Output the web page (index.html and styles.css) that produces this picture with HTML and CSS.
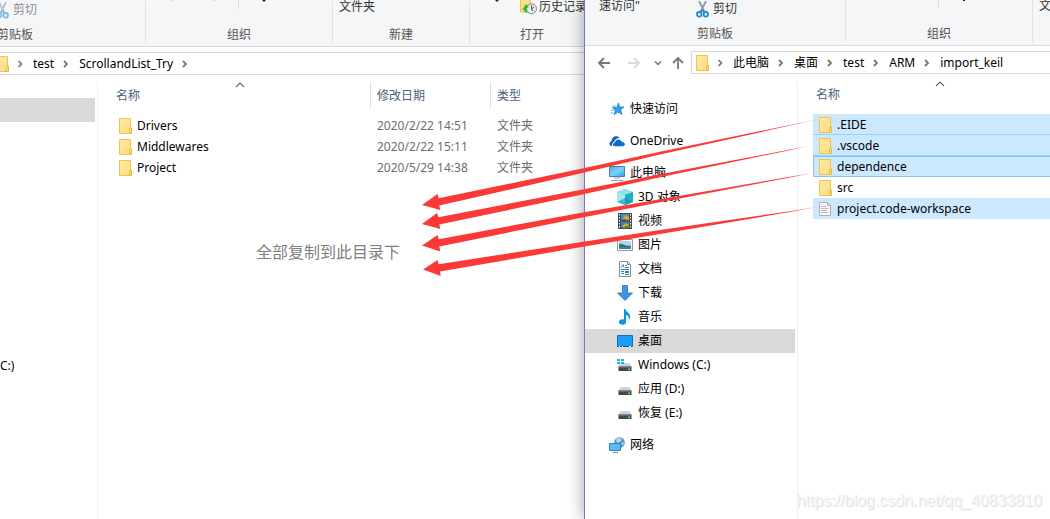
FILE: index.html
```html
<!DOCTYPE html>
<html lang="zh-CN">
<head>
<meta charset="utf-8">
<title>文件资源管理器</title>
<link rel="stylesheet" href="styles.css">
</head>
<body>
<svg class="defs" aria-hidden="true">
  <defs>
    <linearGradient id="fold" x1="0" y1="0" x2="1" y2="1"><stop offset="0" stop-color="#ffe9a6"/><stop offset="1" stop-color="#fddd7c"/></linearGradient>
    <linearGradient id="screen" x1="0" y1="0" x2="1" y2="1"><stop offset="0" stop-color="#3fb0f5"/><stop offset=".5" stop-color="#7fd0fb"/><stop offset="1" stop-color="#2f9ff0"/></linearGradient>
    <symbol id="folder" viewBox="0 0 13 16"><path d="M.5.5h11v10.500l1 .5v4h-12z" fill="url(#fold)" stroke="#efc54a"/><path d="M10.500 15.500v-4l.7-1.500h1.300v5.500z" fill="#fde08a" stroke="#e5b93c"/></symbol>
    <symbol id="chev" viewBox="0 0 25 10"><path d="M10 2l3 3-3 3" fill="none" stroke="#777" stroke-width="1.800"/></symbol>
    <symbol id="sort" viewBox="0 0 10 6"><path d="M1 5l4-4 4 4" fill="none" stroke="#666" stroke-width="1.200"/></symbol>
    <symbol id="drive" viewBox="0 0 16 16"><path d="M3.500 6h9l2 4H1.500z" fill="#cfd2d4"/><path d="M1.500 9.500h13V14h-13z" fill="#42484c"/><path d="M1.500 9.500h13v1h-13z" fill="#7c8286"/><path d="M11 11.500h2V13h-2z" fill="#3ff05a"/></symbol>
    <symbol id="cut" viewBox="0 0 13 17"><path d="M3 0l5.500 11M10 0L4.500 11" fill="none" stroke="#8e9aa8" stroke-width="1.800"/><ellipse cx="3.200" cy="13.200" rx="2.200" ry="2.400" fill="none" stroke="#2187c9" stroke-width="1.800"/><ellipse cx="9.800" cy="13.200" rx="2.200" ry="2.400" fill="none" stroke="#2187c9" stroke-width="1.800"/><path d="M4.500 11.500l2-2.500 2 2.500" fill="none" stroke="#2187c9" stroke-width="1.500"/></symbol>
  </defs>
</svg>

<main class="desktop">
  <section class="window window-back">
    <div class="ribbon">
      <div class="group group-clip">
        <div class="tools"><button class="tool tool-cut off" disabled><svg class="i-cut"><use href="#cut"/></svg>剪切</button></div>
        <div class="caption">剪贴板</div>
      </div>
      <div class="group group-org">
        <svg class="marks" viewBox="0 0 186 10"><path d="M26 0h1v1h-1zM68 0h1v1h-1z" fill="#b8bcc0"/><path d="M92 0h1v9h-1z" fill="#dcdddf"/><path d="M116 0h4l-1 1h-.5v1h-1V1H117z" fill="#222"/></svg>
        <div class="caption">组织</div>
      </div>
      <div class="group group-new">
        <div class="tools"><button class="tool tool-new">文件夹</button></div>
        <div class="caption">新建</div>
      </div>
      <div class="group group-open">
        <svg class="marks" viewBox="0 0 124 10"><path d="M25 0h4l-1 1h-.5v1h-1V1H26z" fill="#222"/></svg>
        <div class="tools"><button class="tool tool-hist">
          <svg class="i-hist" viewBox="0 0 17 16"><path d="M.5 0h10v13H.5z" fill="#fbdf86" stroke="#efc54a"/><circle cx="11.500" cy="9.800" r="5" fill="#e8e8e8" stroke="#8b8b8b"/><path d="M11.500 6.500v3.500l2.500-2M11.500 10l1.500 2" fill="none" stroke="#555"/><path d="M2 11l4-6 3 3-1.800.5C6 10 6.500 12.500 7.500 14 5 13.500 4 12 4 10.500z" fill="#2fb63a"/></svg>历史记录</button></div>
        <div class="caption">打开</div>
      </div>
    </div>
    <div class="bar">
      <nav class="address">
        <svg class="i-folder"><use href="#folder"/></svg>
        <svg class="i-chev"><use href="#chev"/></svg><a href="#">test</a>
        <svg class="i-chev"><use href="#chev"/></svg><a href="#">ScrollandList_Try</a>
        <svg class="i-chev"><use href="#chev"/></svg>
      </nav>
    </div>
    <div class="body">
      <nav class="tree">
        <a class="node selected" href="#" aria-label="快速访问"></a>
        <a class="node node-c" href="#">C:)</a>
      </nav>
      <div class="files">
        <table class="list">
          <colgroup><col class="c-name"><col class="c-date"><col class="c-type"></colgroup>
          <thead><tr><th><span class="head">名称<svg class="i-sort"><use href="#sort"/></svg></span></th><th><span class="head">修改日期</span></th><th><span class="head last">类型</span></th></tr></thead>
          <tbody>
            <tr><td><span class="file"><svg class="i-folder"><use href="#folder"/></svg>Drivers</span></td><td>2020/2/22 14:51</td><td>文件夹</td></tr>
            <tr><td><span class="file"><svg class="i-folder"><use href="#folder"/></svg>Middlewares</span></td><td>2020/2/22 15:11</td><td>文件夹</td></tr>
            <tr><td><span class="file"><svg class="i-folder"><use href="#folder"/></svg>Project</span></td><td>2020/5/29 14:38</td><td>文件夹</td></tr>
          </tbody>
        </table>
        <p class="note">全部复制到此目录下</p>
      </div>
    </div>
  </section>

  <section class="window window-front">
    <div class="ribbon">
      <div class="group group-clip">
        <div class="tools"><button class="tool tool-pin">速访问"</button><button class="tool tool-cut"><svg class="i-cut"><use href="#cut"/></svg>剪切</button></div>
        <div class="caption">剪贴板</div>
      </div>
      <div class="group group-org">
        <svg class="marks" viewBox="0 0 186 10"><path d="M92 0h1v8h-1z" fill="#dcdddf"/><path d="M117 0h2v1h-2z" fill="#222"/></svg>
        <div class="caption">组织</div>
      </div>
      <div class="group group-new">
        <div class="tools"><button class="tool tool-new">文</button></div>
      </div>
    </div>
    <div class="bar">
      <div class="history">
        <button class="go" aria-label="后退"><svg viewBox="0 0 14 14"><path d="M13 7H2M7 2L2 7l5 5" fill="none" stroke="#777" stroke-width="1.800"/></svg></button>
        <button class="go" aria-label="前进"><svg viewBox="0 0 14 14"><path d="M1 7h11M7 2l5 5-5 5" fill="none" stroke="#d9d9d9" stroke-width="1.800"/></svg></button>
        <button class="go go-small" aria-label="最近"><svg viewBox="0 0 8 14"><path d="M1 5.500l3 3 3-3" fill="none" stroke="#777" stroke-width="1.500"/></svg></button>
        <button class="go" aria-label="向上"><svg viewBox="0 0 14 14"><path d="M6 13V2M1 7l5-5 5 5" fill="none" stroke="#777" stroke-width="1.800"/></svg></button>
      </div>
      <nav class="address">
        <svg class="i-folder"><use href="#folder"/></svg>
        <svg class="i-chev"><use href="#chev"/></svg><a href="#">此电脑</a>
        <svg class="i-chev"><use href="#chev"/></svg><a href="#">桌面</a>
        <svg class="i-chev"><use href="#chev"/></svg><a href="#">test</a>
        <svg class="i-chev"><use href="#chev"/></svg><a href="#">ARM</a>
        <svg class="i-chev"><use href="#chev"/></svg><a href="#">import_keil</a>
      </nav>
    </div>
    <div class="body">
      <nav class="tree">
        <a class="node" href="#"><svg viewBox="0 0 16 16"><path d="M9.500 2l1.200 4h4.300l-3.300 2.800 1.300 4.700L9 11l-3.800 2.500L6.500 9.300 3.500 6.500H7.800z" fill="#2ea3ee" stroke="#1878bd" stroke-width=".7"/><path d="M3 5h4M2 9h4M1.500 12h3" stroke="#5db4ec"/></svg>快速访问</a>
        <a class="node top" href="#"><svg viewBox="0 0 16 16"><path d="M3 13C0 13-.5 9 2.500 8.300 2.500 4 8 1.500 10.500 5c-3 0-5 2-5.500 4-1.500.5-2.500 2-2 4z" fill="#0a5fb8"/><path d="M6 13.200c-3 0-2.500-3.600 0-3.700C6.500 5.500 12 5.500 12.800 9c3.700-.3 4.200 4.200.7 4.200z" fill="#0b6fd0"/></svg>OneDrive</a>
        <a class="node top" href="#"><svg viewBox="0 0 16 16"><path d="M.5 1.500h15v10H.5z" fill="url(#screen)" stroke="#4b7fa8"/><path d="M5 13h6M2 15.500h12" stroke="#8d9aa6"/></svg>此电脑</a>
        <a class="node sub" href="#"><svg viewBox="0 0 16 16"><path d="M0 3l8-3 8 3v10l-8 3-8-3z" fill="#3cc0d2"/><path d="M0 3l8-3 8 3-8 3z" fill="#8fe3ea"/><path d="M0 3l8 3v10l-8-3z" fill="#a4e9ef"/><path d="M8 6l8-3v10l-8 3z" fill="#1fb0c6"/><path d="M0 13l8-4 8 4-8 3z" fill="#1596b0" opacity=".6"/></svg>3D 对象</a>
        <a class="node sub" href="#"><svg viewBox="0 0 16 16"><path d="M1 0h14v16H1z" fill="#4b4b4b"/><path d="M4 1h8v6H4z" fill="#4a86d8"/><path d="M4 8.500h8v6H4z" fill="#3f74cc"/><path d="M6 5l3-3 3 2v3H5zM5 13l4-3 3 2v2.500H6z" fill="#d2aa24"/><path d="M4 6h5v1H4zM8 13h4v1.500H8z" fill="#3a8c3b"/><path d="M2.500 1v14M13.500 1v14" stroke="#fff" stroke-dasharray="1.500 1.500"/></svg>视频</a>
        <a class="node sub" href="#"><svg viewBox="0 0 16 16"><path d="M.5 2.500h15v11H.5z" fill="#fff" stroke="#999"/><path d="M2 4h12v8H2z" fill="#a9d7f5"/><path d="M2 7c3-1 5 1 7 1.500l5 .5v3H2z" fill="#387263"/><path d="M2 10h12v2H2z" fill="#3a7cab"/></svg>图片</a>
        <a class="node sub" href="#"><svg viewBox="0 0 16 16"><path d="M2.500.5h8l3 3v12h-11z" fill="#fff" stroke="#8b8b8b"/><path d="M10.500.5v3h3" fill="none" stroke="#8b8b8b"/><path d="M4 6.500l2-3 1 3M8 4.500h2M8 6.500h4M4 8.500h8M4 10.500h3M4 12.500h3M8 13.500h4" fill="none" stroke="#2d86c7"/><path d="M8 10h4v2H8z" fill="#3e86b8"/></svg>文档</a>
        <a class="node sub" href="#"><svg viewBox="0 0 16 16"><path d="M5.500.5h5v7.500h5L8 15.500.5 8h5z" fill="#3c94e2" stroke="#2676bd" stroke-width=".8"/></svg>下载</a>
        <a class="node sub" href="#"><svg viewBox="0 0 16 16"><ellipse cx="5.500" cy="13" rx="3.500" ry="2.800" fill="#0b95ea"/><path d="M7 0h1.500c.5 3.500 5.500 4 4.500 8.500-.3 1.500-1 2-1.500 2.500 1-3-.5-4.500-2.500-5V13H7z" fill="#0b95ea"/></svg>音乐</a>
        <a class="node sub selected" href="#"><svg viewBox="0 0 16 16"><path d="M.5 2.500h15v11H.5z" fill="#1a9cf6" stroke="#0d6fc0"/><path d="M1 13.500h14" stroke="#0a4d86"/><path d="M2 13.500h1M5 13.500h1M12 13.500h2" stroke="#fff"/></svg>桌面</a>
        <a class="node sub" href="#"><svg viewBox="0 0 16 16"><use href="#drive"/><path d="M0 2h3v2H0zM4 2h3v2H4zM0 5h3v2H0zM4 5h3v2H4z" fill="#14b6f0"/></svg>Windows (C:)</a>
        <a class="node sub" href="#"><svg><use href="#drive"/></svg>应用 (D:)</a>
        <a class="node sub" href="#"><svg><use href="#drive"/></svg>恢复 (E:)</a>
        <a class="node top" href="#"><svg viewBox="0 0 16 16"><circle cx="10.500" cy="5.500" r="5.300" fill="#5d93b7"/><path d="M7 3c2-3 5-2 6 0l-2 2-3 1zM12 6l3-1-1 4z" fill="#b8d7e8"/><path d="M.5 6.500h11v7H.5z" fill="#58bdf6" stroke="#2b83c0"/><path d="M4 15.500h5" stroke="#6490b0"/></svg>网络</a>
      </nav>
      <div class="files">
        <table class="list">
          <thead><tr><th><span class="head last">名称<svg class="i-sort"><use href="#sort"/></svg></span></th></tr></thead>
          <tbody>
            <tr class="on"><td><span class="file"><svg class="i-folder"><use href="#folder"/></svg>.EIDE</span></td></tr>
            <tr class="on"><td><span class="file"><svg class="i-folder"><use href="#folder"/></svg>.vscode</span></td></tr>
            <tr class="on focus"><td><span class="file"><svg class="i-folder"><use href="#folder"/></svg>dependence</span></td></tr>
            <tr><td><span class="file"><svg class="i-folder"><use href="#folder"/></svg>src</span></td></tr>
            <tr class="on"><td><span class="file"><svg class="i-folder" viewBox="0 0 13 16"><path d="M.5 1.500h8l3 3v10H.5z" fill="#f8f8f8" stroke="#b0b0b0"/><path d="M8.500 1.500v3h3" fill="none" stroke="#b0b0b0"/><path d="M2 5.500h5M2 7.500h7M2 9.500h6M2 11.500h7" stroke="#b4bac0"/></svg>project.code-workspace</span></td></tr>
          </tbody>
        </table>
      </div>
    </div>
  </section>

  <svg class="arrows" viewBox="0 0 1050 519" width="1050" height="519" aria-hidden="true">
    <g fill="#fb3a38">
      <path d="M422 205L437.500 194l1.200 4.200L580 169l80-17.300L790 125l30-6-30 6.600-130 29L580 173.500 439.300 205.500l1 4.500z"/>
      <path d="M422 224L437 213l1.500 4.200L580 190l80-15.700L785 150.500l23-4.500-23 5.200L660 177.300 580 195 439.300 224.500l1 4.500z"/>
      <path d="M422 245.500L437.500 235l1.200 4.200L580 213l80-13.700 130-22.600 22-3.700-22 4.400-130 24.900L580 218 439.300 246.500l1 5z"/>
      <path d="M423 269.500L437.500 260l1.200 4.200L580 242.300l80-12.300 130-18.700 27-4.300-27 5L660 234l-80 13.300L440 271.500l.7 4.500z"/>
    </g>
  </svg>
  <div class="watermark">https://blog.csdn.net/qq_40833810</div>
</main>
</body>
</html>
```
FILE: styles.css
```css
* { box-sizing: border-box; }
body {
  margin: 0;
  font: 12px/18px "Noto Sans", "Noto Sans CJK SC", sans-serif;
  color: #000;
}
a { color: inherit; text-decoration: none; }
button {
  margin: 0;
  padding: 0;
  border: 0;
  background: none;
  font: inherit;
  color: inherit;
}
svg { display: block; flex: none; }
.defs { position: absolute; width: 0; height: 0; }

.desktop {
  position: relative;
  height: 100vh;
  overflow: hidden;
  background: #fff;
}
.window {
  position: absolute;
  top: 0;
  bottom: 0;
  display: flex;
  flex-direction: column;
  background: #fff;
  overflow: hidden;
}
.window-back { left: 0; width: 600px; }
.window-front {
  left: 584px;
  right: 0;
  border-left: 1px solid #7775d2;
  box-shadow: 0 0 16px rgba(0, 0, 0, .38);
}

.ribbon {
  display: flex;
  flex: none;
  height: 46px;
  background: #f4f6f8;
  border-bottom: 1px solid #d8dadc;
}
.window-back .ribbon { height: 47px; padding-top: 1px; }
.group {
  position: relative;
  display: flex;
  flex: none;
  flex-direction: column;
  justify-content: flex-end;
  height: 42px;
  border-right: 1px solid #dfe1e4;
}
.group-clip { width: 261px; }
.window-back .group-clip { margin-left: -115px; }
.group-org { width: 187px; }
.group-new { width: 137px; }
.group-open { width: 125px; }
.tools { display: flex; flex: 1; }
.tool {
  display: flex;
  align-items: center;
  height: 18px;
  white-space: nowrap;
  color: #333;
}
.tool-pin { padding-left: 14px; margin-top: -3px; width: 111px; }
.tool-cut { gap: 4px; }
.off { margin-left: 111px; color: #8c8f92; }
.off .i-cut { opacity: .55; }
.tool-new { padding-left: 6px; margin-top: -3px; }
.tool-hist { padding-left: 50px; gap: 2px; margin-top: -3px; }
.caption { height: 17px; text-align: center; color: #555; }
.marks { position: absolute; left: 0; top: 0; height: 10px; width: 186px; }
.window-back .marks { top: -1px; }
.group-open .marks { width: 124px; }
.i-cut { width: 13px; height: 17px; }
.i-hist { width: 17px; height: 16px; }
.i-folder { width: 13px; height: 16px; }
.i-chev { width: 25px; height: 10px; }
.address .i-folder + .i-chev { width: 24px; }

.bar { display: flex; flex: none; padding-top: 5px; }
.history {
  display: flex;
  align-items: center;
  width: 106px;
  padding-left: 12px;
  gap: 16px;
}
.go svg { width: 14px; height: 14px; }
.go-small { margin-right: -6px; margin-left: -3px; }
.go-small svg { width: 8px; }
.address {
  display: flex;
  flex: 1;
  align-items: center;
  height: 23px;
  padding-left: 4px;
  border: 1px solid #d9d9d9;
  border-right: 0;
  white-space: nowrap;
}
.window-back .address { border-left: 0; padding: 0; }
.window-back .address .i-folder { margin-left: -4px; }

.body { display: flex; flex: 1; min-height: 0; }
.tree {
  display: flex;
  flex: none;
  flex-direction: column;
  width: 210px;
  padding-top: 23px;
}
.window-back .tree { width: 95px; }
.node {
  display: flex;
  align-items: center;
  flex: none;
  height: 24px;
  padding-left: 24px;
  gap: 5px;
}
.node svg { width: 16px; height: 16px; }
.top { margin-top: 8px; }
.sub { padding-left: 32px; }
.selected { background: #d9d9d9; }
.node-c { margin-top: 232px; padding-left: 0; }
.files {
  flex: 1;
  margin: 7px 0 0 2px;
  padding-left: 15px;
  border-left: 1px solid #f0f0f0;
}
.list {
  width: 100%;
  table-layout: fixed;
  border-collapse: collapse;
}
.c-name { width: 258px; }
.c-date { width: 120px; }
th { padding: 0 0 6px; font-weight: normal; text-align: left; }
.head {
  position: relative;
  display: flex;
  align-items: center;
  height: 27px;
  padding-left: 6px;
  border-right: 1px solid #e0e0e0;
  color: #4c607a;
}
th:first-child .head { padding-left: 3px; }
.head.last { border-right: 0; }
.i-sort { position: absolute; left: 122px; top: 0; width: 10px; height: 6px; }
td { height: 21px; padding: 0 0 0 6px; color: #6d6d6d; white-space: nowrap; }
.file { display: flex; align-items: center; gap: 5px; color: #000; }
.on { background: #cce8ff; box-shadow: inset 0 -1px #99d1ff; }
.on:last-child { box-shadow: none; }
.focus { box-shadow: inset 1px 1px #84c4fa, inset 0 -1px #84c4fa; }
.note {
  margin: 62px 0 0 143px;
  font-size: 16px;
  line-height: 24px;
  color: #7f7f7f;
}

.arrows { position: absolute; left: 0; top: 0; }
.watermark {
  position: absolute;
  right: 8px;
  bottom: 8px;
  font: 16px/20px "Liberation Sans", sans-serif;
  color: #f6f6f6;
  text-shadow: 1px 1px 1px #dadada;
}
```
